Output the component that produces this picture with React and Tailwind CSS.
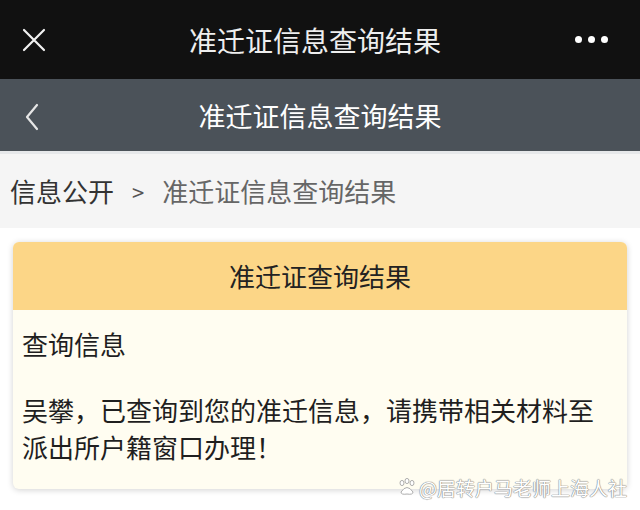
export default function App() {
    return (
        <div
            className="w-[640px] h-[510px] overflow-hidden bg-white"
            style={{ fontFamily: '"Noto Sans CJK SC", "Noto Sans", sans-serif' }}
        >
            {/* WeChat top bar */}
            <div className="h-[79px] bg-[#111111] flex items-center justify-between px-[20px]">
                <svg width="26" height="26" viewBox="0 0 26 26" className="ml-[1px]">
                    <path d="M3 3 L23 23 M23 3 L3 23" stroke="#f2f2f2" strokeWidth="2.2" strokeLinecap="round" />
                </svg>
                <span className="text-[28px] text-[#eeeeee] leading-none ml-[8px]">准迁证信息查询结果</span>
                <div className="flex gap-[6px] mr-[12px]">
                    <span className="w-[7px] h-[7px] rounded-full bg-white" />
                    <span className="w-[7px] h-[7px] rounded-full bg-white" />
                    <span className="w-[7px] h-[7px] rounded-full bg-white" />
                </div>
            </div>

            {/* Page nav bar */}
            <div className="h-[75px] bg-[#4b5259] relative flex items-center justify-center border-b-[3px] border-[#e6e8ea]">
                <svg width="16" height="28" viewBox="0 0 16 28" className="absolute left-[24px] top-[24px]">
                    <path d="M13 2 L3 14 L13 26" fill="none" stroke="#e6e6e6" strokeWidth="2.2" strokeLinecap="round" strokeLinejoin="round" />
                </svg>
                <span className="text-[27px] text-white leading-none">准迁证信息查询结果</span>
            </div>

            {/* Breadcrumb */}
            <div className="h-[74px] bg-[#f5f5f5] flex items-center pl-[10px] text-[26px] leading-none">
                <span className="text-[#333333]">信息公开</span>
                <span className="text-[#555555] text-[22px] mx-[18px]">&gt;</span>
                <span className="text-[#666666]">准迁证信息查询结果</span>
            </div>

            {/* Result card */}
            <div className="px-[13px] pt-[14px]">
                <div className="relative rounded-[6px] overflow-hidden shadow-[0_1px_6px_rgba(0,0,0,0.18)] bg-[#fffdf1]">
                    <div className="h-[68px] bg-[#fcd687] flex items-center justify-center text-[26px] text-[#222222] leading-none">
                        准迁证查询结果
                    </div>
                    <div className="px-[9px] pt-[15px] pb-[24px] text-[26px] text-[#1f1f1f]">
                        <div className="leading-[37px]">查询信息</div>
                        <div className="mt-[29px] leading-[37px]">
                            吴攀，已查询到您的准迁信息，请携带相关材料至派出所户籍窗口办理！
                        </div>
                    </div>
                </div>
                {/* watermark */}
                <div className="relative">
                    <div className="absolute right-[0px] top-[-12px] flex items-center gap-[2px] text-[19px] leading-none text-white [text-shadow:0_0_1px_#888,0_0_1px_#888,0_0_1px_#888]">
                        <svg width="20" height="20" viewBox="0 0 20 20">
                            <g fill="#fff" stroke="#999" strokeWidth="0.8">
                                <ellipse cx="5" cy="6" rx="2" ry="2.6" />
                                <ellipse cx="10" cy="4" rx="2" ry="2.6" />
                                <ellipse cx="15" cy="6" rx="2" ry="2.6" />
                                <path d="M4 15 Q10 6 16 15 Q16 18 10 17 Q4 18 4 15 Z" />
                            </g>
                        </svg>
                        <span>@居转户马老师上海人社</span>
                    </div>
                </div>
            </div>
        </div>
    );
}
